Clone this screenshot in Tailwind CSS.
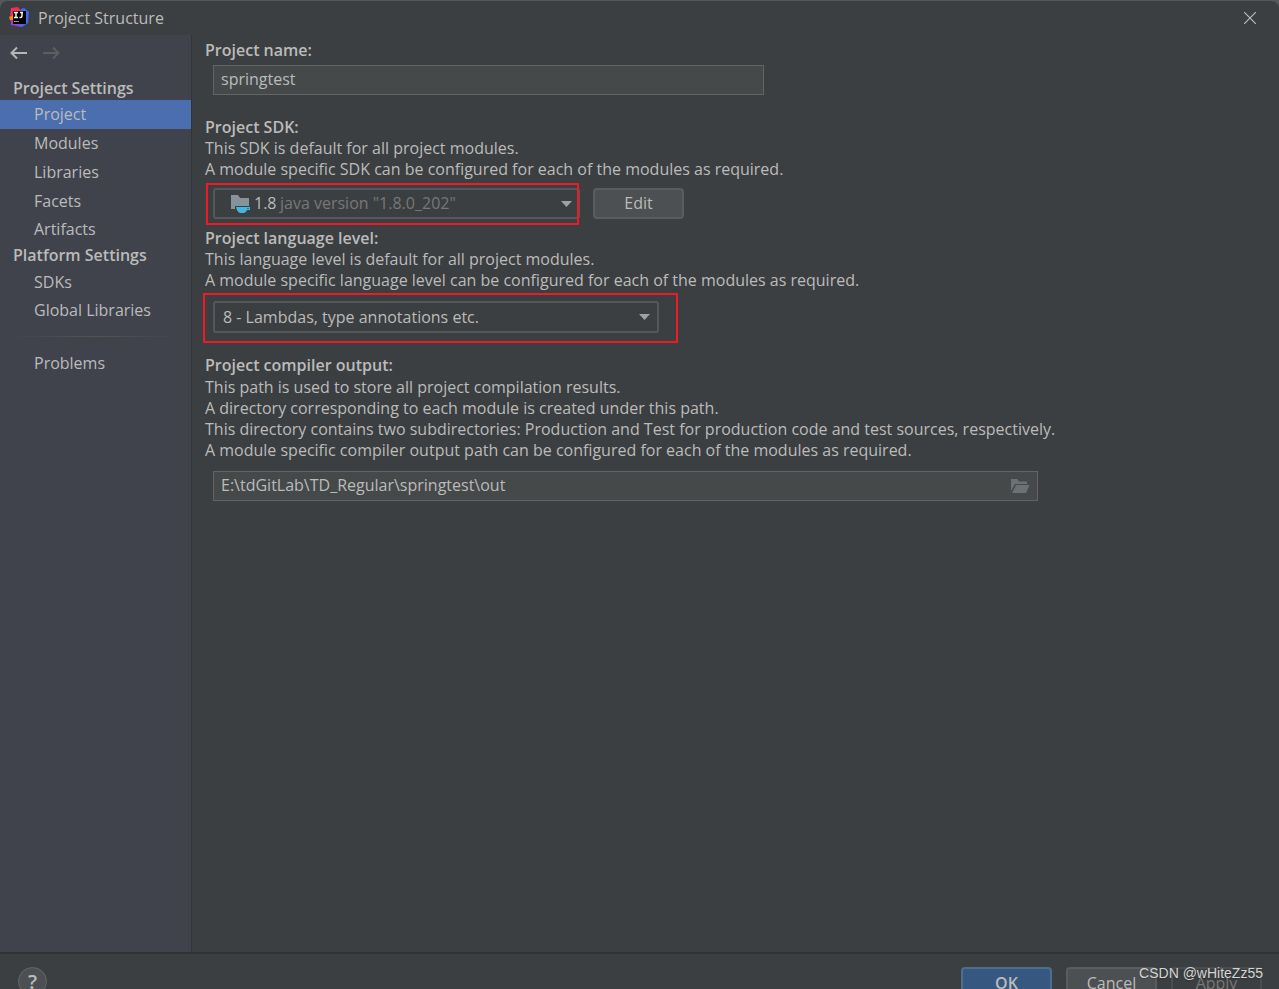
<!DOCTYPE html>
<html lang="en">
<head>
<meta charset="utf-8">
<title>Project Structure</title>
<script src="https://cdn.jsdelivr.net/npm/@tailwindcss/browser@4"></script>
</head>
<body class="h-screen overflow-hidden bg-[#55585a] font-['Open_Sans','Noto_Sans',sans-serif] text-base leading-[21px] text-[#bbbbbb]">
<div class="relative flex h-full flex-col overflow-hidden rounded-t-lg border-t border-[#55585a] bg-[#3c3f41]">
  <header class="flex h-[34px] shrink-0 items-center gap-2 pl-2 pr-[21px]">
    <svg class="size-[22px]" viewBox="0 0 22 22" aria-hidden="true">
      <path d="M3 1 10 0 14 5 8 13 2 8Z" fill="#fe2857"/>
      <path d="M13 2 16 1 21 5 20 16 14 20 8 19Z" fill="#3b6cf0"/>
      <path d="M1 10 5 8 6 16 2 13Z" fill="#fc801d"/>
      <path d="M3 13 10 13 13 18 10 19 3 18Z" fill="#a63bd8"/>
      <path d="M5 4h13v13H5z" fill="#000"/>
      <path d="M6 5.500h4M8 5.500v5M6 10.500h4M12 5.500h3M14 5.500v3.500q0 1.500-1.500 1.500H11.500" fill="none" stroke="#fff" stroke-width="1.400"/>
      <path d="M6 14.500h5" stroke="#999" stroke-width="1.200"/>
    </svg>
    <h1 class="flex-1">Project Structure</h1>
    <button type="button" aria-label="Close" class="flex size-4 items-center justify-center">
      <svg class="size-3" viewBox="0 0 12 12" fill="none" stroke="#bbbbbb" stroke-width="1.200"><path d="M0 0 12 12M12 0 0 12"/></svg>
    </button>
  </header>

  <div class="flex min-h-0 flex-1">
    <aside class="w-48 shrink-0 border-r border-[#323435] bg-[#40434c]">
      <div class="flex h-9 items-center gap-4 pl-[10px]">
        <button type="button" aria-label="Back"><svg class="h-4 w-[17px]" viewBox="0 0 17 16" fill="none" stroke="#b4b6b8" stroke-width="2"><path d="M17 8H2M7 2.500 1.500 8 7 13.500"/></svg></button>
        <button type="button" aria-label="Forward" disabled><svg class="h-4 w-[17px]" viewBox="0 0 17 16" fill="none" stroke="#5c5e60" stroke-width="2"><path d="M0 8H15M10 2.500 15.500 8 10 13.500"/></svg></button>
      </div>
      <nav class="flex flex-col">
        <h2 class="flex h-[29px] items-end pb-px pl-[13px] font-semibold">Project Settings</h2>
        <a href="#" aria-current="page" class="flex h-[29px] w-[191px] items-center bg-[#4b6eaf] pl-[34px]">Project</a>
        <a href="#" class="flex h-[29px] items-center pl-[34px]">Modules</a>
        <a href="#" class="flex h-[29px] items-center pl-[34px]">Libraries</a>
        <a href="#" class="flex h-7 items-center pl-[34px]">Facets</a>
        <a href="#" class="flex h-7 items-center pl-[34px]">Artifacts</a>
        <h2 class="flex h-[25px] items-center pl-[13px] font-semibold">Platform Settings</h2>
        <a href="#" class="flex h-7 items-center pl-[34px]">SDKs</a>
        <a href="#" class="flex h-7 items-center pl-[34px]">Global Libraries</a>
        <div class="mx-[10px] my-3 h-px bg-linear-to-r from-transparent via-[#555453] to-transparent"></div>
        <a href="#" class="flex h-7 items-center pl-[34px]">Problems</a>
      </nav>
    </aside>

    <main class="min-w-0 flex-1 pl-[13px] pt-[5px]">
      <section>
        <label for="name" class="block font-semibold">Project name:</label>
        <div class="mt-1 pl-2 pr-4">
          <input id="name" type="text" value="springtest" class="h-[30px] w-[551px] max-w-full border border-[#646464] bg-[#45494a] px-[7px] pb-[2px] outline-none">
        </div>
      </section>

      <section class="mt-[22px]">
        <label for="sdk" class="block font-semibold">Project SDK:</label>
        <p>This SDK is default for all project modules.</p>
        <p>A module specific SDK can be configured for each of the modules as required.</p>
        <div class="mt-2 flex gap-[13px] pl-2">
          <div class="relative w-[367px]">
            <select id="sdk" class="h-[31px] w-full appearance-none rounded-[3px] border-2 border-[#55585a] bg-[#3c3f41] pl-[39px] outline-none"><option>1.8</option></select>
            <div class="pointer-events-none absolute inset-0 flex items-center pl-[17px] pr-2 text-[#777777]">
              <svg class="h-[18px] w-5" viewBox="0 0 20 18" aria-hidden="true">
                <path d="M1 0h7l2 3h9v8H5v3H1z" fill="#87939a"/>
                <path d="M6 12h14v3H17q-1 3-3 3H10Q7 17 6 12z" fill="#40b6e0"/>
                <path d="M17.200 13h1.500v.8h-1.500z" fill="#3c3f41"/>
              </svg>
              <span class="ml-[30px] flex-1">java version "1.8.0_202"</span>
              <svg class="h-[6px] w-[11px]" viewBox="0 0 11 6" fill="#9fa2a5" aria-hidden="true"><path d="M0 0h11L5.500 6z"/></svg>
            </div>
            <div class="pointer-events-none absolute -top-[5px] -left-[7px] h-[42px] w-[373px] border-2 border-[#ed1c24]"></div>
          </div>
          <button type="button" class="h-[31px] w-[91px] rounded-[4px] border-2 border-[#5a5d5e] bg-[#4c5052]">Edit</button>
        </div>
      </section>

      <section class="mt-[9px]">
        <label for="level" class="block font-semibold">Project language level:</label>
        <p>This language level is default for all project modules.</p>
        <p>A module specific language level can be configured for each of the modules as required.</p>
        <div class="mt-[10px] pl-2">
          <div class="relative w-[446px]">
            <select id="level" class="block h-8 w-full appearance-none rounded-[3px] border-2 border-[#55585a] bg-[#3c3f41] pl-2 outline-none"><option>8 - Lambdas, type annotations etc.</option></select>
            <div class="pointer-events-none absolute inset-0 flex items-center justify-end pr-[9px]">
              <svg class="h-[6px] w-[11px]" viewBox="0 0 11 6" fill="#9fa2a5" aria-hidden="true"><path d="M0 0h11L5.500 6z"/></svg>
            </div>
            <div class="pointer-events-none absolute -top-2 -left-[10px] h-[50px] w-[475px] border-2 border-[#ed1c24]"></div>
          </div>
        </div>
      </section>

      <section class="mt-[22px]">
        <label for="output" class="mb-px block font-semibold">Project compiler output:</label>
        <p>This path is used to store all project compilation results.</p>
        <p>A directory corresponding to each module is created under this path.</p>
        <p>This directory contains two subdirectories: Production and Test for production code and test sources, respectively.</p>
        <p>A module specific compiler output path can be configured for each of the modules as required.</p>
        <div class="mt-[10px] pl-2 pr-4">
          <div class="flex h-[30px] w-[825px] max-w-full items-center border border-[#646464] bg-[#45494a] pl-[7px] pr-[7px]">
            <input id="output" type="text" value="E:\tdGitLab\TD_Regular\springtest\out" class="min-w-0 flex-1 bg-transparent pb-[2px] outline-none">
            <button type="button" aria-label="Browse"><svg class="block h-[14px] w-5" viewBox="0 0 20 14" fill="#6b7276"><path d="M1 0h6l2 2.500h8V5H5L1 12z"/><path d="M6 6h13.500L16 14H2z"/></svg></button>
          </div>
        </div>
      </section>
    </main>
  </div>

  <footer class="flex h-[37px] shrink-0 items-start gap-[14px] overflow-hidden border-t-2 border-[#323232] pl-[18px] pr-[17px] pt-[13px]">
    <button type="button" aria-label="Help" class="size-[29px] shrink-0 rounded-full border border-[#656869] bg-[#4c5052] text-xl leading-[27px] font-semibold">?</button>
    <span class="flex-1"></span>
    <button type="button" class="h-8 w-[91px] shrink-0 rounded-[4px] border-2 border-[#4c708c] bg-[#365880] font-semibold">OK</button>
    <button type="button" class="h-8 w-[91px] shrink-0 rounded-[4px] border-2 border-[#5a5d5e] bg-[#4c5052]">Cancel</button>
    <button type="button" disabled class="h-8 w-[91px] shrink-0 rounded-[4px] border-2 border-[#4b4e50] text-[#777777]">Apply</button>
  </footer>
  <div class="pointer-events-none absolute right-4 bottom-[6px] font-['Liberation_Sans',sans-serif] text-sm leading-5 text-[#d4d4d4] text-shadow-sm">CSDN @wHiteZz55</div>
</div>
</body>
</html>
